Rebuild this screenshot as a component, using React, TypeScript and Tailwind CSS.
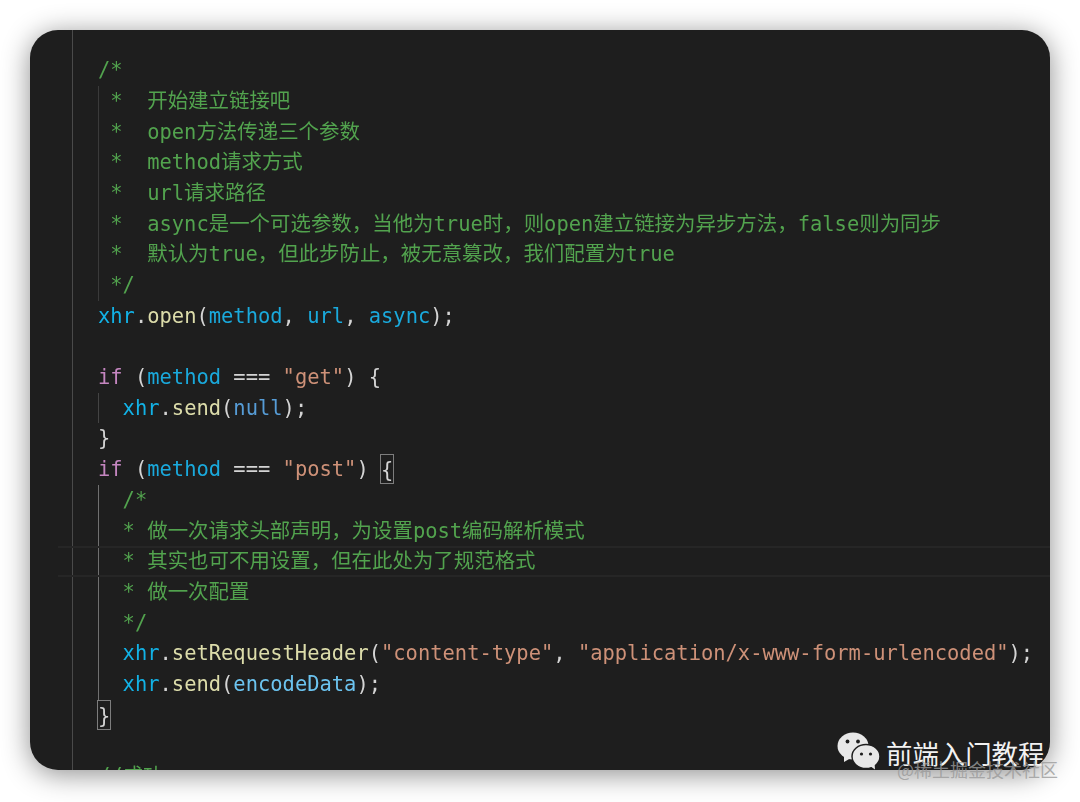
const keyword = "text-[#c586c0]";
const variable = "text-[#12b2e6]";
const param = "text-[#1aa9dc]";
const fn = "text-[#dcdcaa]";
const str = "text-[#ce9178]";
const punct = "text-[#d4d4d4]";
const comment = "text-[#52a34e]";

function Line({ children, className = "" }: { children?: React.ReactNode; className?: string }) {
  return <div className={`h-[30.7px] whitespace-pre ${className}`}>{children}</div>;
}

function Comment({ text, className = "" }: { text: string; className?: string }) {
  return <Line className={`${comment} ${className}`}>{text}</Line>;
}

function Guide({ children, className = "" }: { children: React.ReactNode; className?: string }) {
  return <div className={`border-l ${className}`}>{children}</div>;
}

function Bracket({ children }: { children: React.ReactNode }) {
  return (
    <span className="inline-block h-[30px] border border-[#7d7d7d] ml-[-1px] mr-[-1px] align-top">
      {children}
    </span>
  );
}

function IfHeader({ value, bracket }: { value: string; bracket: React.ReactNode }) {
  return (
    <Line className={punct}>
      <span className={keyword}>if</span> (<span className={param}>method</span> === <span className={str}>"{value}"</span>) {bracket}
    </Line>
  );
}

function Call({ name, children }: { name: string; children: React.ReactNode }) {
  return (
    <Line className={punct}>
      <span className={variable}>xhr</span>.<span className={fn}>{name}</span>({children});
    </Line>
  );
}

function WeChatIcon() {
  return (
    <svg width="44" height="38" viewBox="0 0 44 38" className="shrink-0">
      <ellipse cx="16" cy="14" rx="15.5" ry="13.5" fill="#e8e8e8" />
      <path d="M7 23 L7 30 L14 26 Z" fill="#e8e8e8" />
      <circle cx="10.5" cy="9.5" r="1.9" fill="#1e1e1e" />
      <circle cx="21" cy="9.5" r="1.9" fill="#1e1e1e" />
      <ellipse cx="29" cy="24.5" rx="14" ry="12" fill="#e8e8e8" stroke="#1e1e1e" strokeWidth="1.5" />
      <path d="M33 34 L38 37.5 L37.5 31 Z" fill="#e8e8e8" />
      <circle cx="24.5" cy="22" r="1.6" fill="#1e1e1e" />
      <circle cx="33.5" cy="22" r="1.6" fill="#1e1e1e" />
    </svg>
  );
}

export default function App() {
  return (
    <div className="relative h-[802px] w-[1080px] overflow-hidden bg-white p-[30px]">
      <div className="h-[740px] w-[1020px] overflow-hidden rounded-[28px] bg-[#1e1e1e] pl-[42px] shadow-[0_4px_28px_rgba(0,0,0,0.45)]">
        <div className="h-full border-l border-[#4a4a4a] pl-[25px] pt-[25.2px] font-['DejaVu_Sans_Mono','Noto_Sans_CJK_SC',monospace] text-[20.45px] leading-[30.7px] blur-[0.4px]">
          <Comment text="/*" />
          <Guide className="border-[#3a3a3a] pl-[11.3px]">
            <Comment text="*  开始建立链接吧" />
            <Comment text="*  open方法传递三个参数" />
            <Comment text="*  method请求方式" />
            <Comment text="*  url请求路径" />
            <Comment text="*  async是一个可选参数，当他为true时，则open建立链接为异步方法，false则为同步" />
            <Comment text="*  默认为true，但此步防止，被无意篡改，我们配置为true" />
            <Comment text="*/" />
          </Guide>
          <Call name="open">
            <span className={param}>method</span>, <span className={param}>url</span>, <span className={param}>async</span>
          </Call>
          <Line />
          <IfHeader value="get" bracket="{" />
          <Guide className="border-[#444444] pl-[23.6px]">
            <Call name="send">
              <span className="text-[#569cd6]">null</span>
            </Call>
          </Guide>
          <Line className={punct}>{"}"}</Line>
          <IfHeader value="post" bracket={<Bracket>{"{"}</Bracket>} />
          <Guide className="border-[#707070] pl-[23.6px]">
            <Comment text="/*" />
            <Comment text="* 做一次请求头部声明，为设置post编码解析模式" />
            <Comment
              text="* 其实也可不用设置，但在此处为了规范格式"
              className="-ml-[65px] border-y-2 border-[#262626] pl-[65px] leading-[26.7px]"
            />
            <Comment text="* 做一次配置" />
            <Comment text="*/" />
            <Call name="setRequestHeader">
              <span className={str}>"content-type"</span>, <span className={str}>"application/x-www-form-urlencoded"</span>
            </Call>
            <Call name="send">
              <span className="text-[#6cc4f0]">encodeData</span>
            </Call>
          </Guide>
          <Line className={punct}>
            <Bracket>{"}"}</Bracket>
          </Line>
          <Line />
          <Comment text="//成功" />
        </div>
      </div>

      {/* 公众号水印 */}
      <div className="absolute left-[837px] top-[732px] flex items-start gap-[5px]">
        <WeChatIcon />
        <span className="mt-[2px] whitespace-nowrap font-['Noto_Sans_CJK_SC',sans-serif] text-[26.4px] leading-[38px] text-[#f2f2f2]">
          前端入门教程
        </span>
      </div>
      <span className="absolute left-[897px] top-[756px] whitespace-nowrap font-['Noto_Sans_CJK_SC',sans-serif] text-[18px] leading-[26px] text-[#9a9a9a]/80">
        @稀土掘金技术社区
      </span>
    </div>
  );
}
